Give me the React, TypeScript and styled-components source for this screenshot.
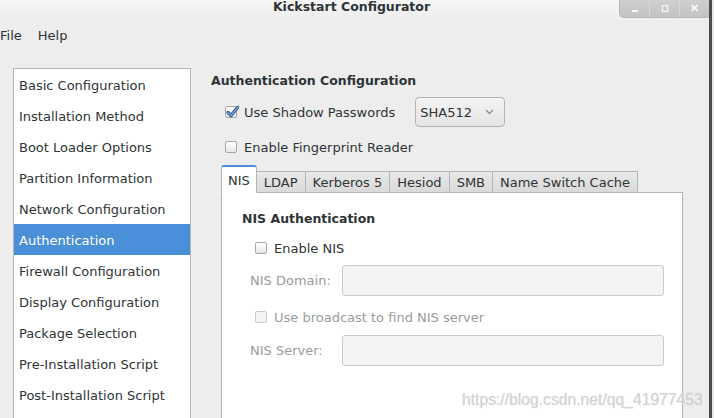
import styled, { createGlobalStyle } from "styled-components";

const GlobalStyle = createGlobalStyle`
    html, body {
        margin: 0;
        padding: 0;
        background: #e8e8e8;
        overflow: hidden;
    }
    body {
        font-family: "DejaVu Sans", "Liberation Sans", sans-serif;
        font-size: 13px;
        color: #2e3436;
    }
`;

const Window = styled.div({
    width: "712px",
    height: "418px",
    boxSizing: "border-box",
    borderRight: "3px solid #4b4d4d",
    backgroundColor: "#ededed",
    display: "flex",
    flexDirection: "column",
    overflow: "hidden"
});

const TitleBar = styled.header({
    height: "23px",
    flexShrink: 0,
    display: "flex",
    alignItems: "flex-start",
    background: "linear-gradient(to bottom, #f7f7f7 0%, #f1f1f1 50%, #ececec 100%)"
});

const TitleSide = styled.div<{ $end?: boolean }>`
    flex: 1;
    display: flex;
    justify-content: ${(p) => (p.$end ? "flex-end" : "flex-start")};
`;

const Title = styled.h1({
    margin: "0",
    fontSize: "12.5px",
    lineHeight: "13px",
    fontWeight: "bold",
    color: "#2e3436",
    paddingRight: "6px"
});

const Controls = styled.div({
    display: "flex",
    height: "17px",
    borderBottomLeftRadius: "5px",
    border: "1px solid #b8b8b8",
    borderTop: "none",
    borderRight: "none",
    background: "linear-gradient(to bottom, #cfcfcf, #c3c3c3)",
    overflow: "hidden"
});

const ControlButton = styled.div<{ $last?: boolean }>`
    width: 29px;
    display: flex;
    align-items: center;
    justify-content: center;
    border-right: ${(p) => (p.$last ? "none" : "1px solid #d8d8d8")};
`;

const MenuBar = styled.nav({
    height: "26px",
    flexShrink: 0,
    display: "flex",
    alignItems: "center",
    gap: "16px"
});

const MenuItem = styled.span({
    lineHeight: "26px",
    color: "#2e3436"
});

const Main = styled.div({
    flex: 1,
    minHeight: 0,
    display: "flex",
    alignItems: "stretch"
});

const Sidebar = styled.ul({
    listStyle: "none",
    margin: "19px 0 0 13px",
    padding: "0",
    width: "178px",
    boxSizing: "border-box",
    border: "1px solid #b4b4b4",
    borderBottom: "none",
    backgroundColor: "#ffffff",
    overflow: "hidden",
    flexShrink: 0
});

const SidebarItem = styled.li<{ $selected?: boolean }>`
    height: 31px;
    line-height: 33px;
    padding-left: 5px;
    white-space: nowrap;
    overflow: hidden;
    color: ${(p) => (p.$selected ? "#ffffff" : "#2e3436")};
    background: ${(p) => (p.$selected ? "#4a90d9" : "transparent")};
`;

const Content = styled.section({
    flex: 1,
    minWidth: 0,
    padding: "23px 0 0 20px",
    display: "flex",
    flexDirection: "column"
});

const Heading = styled.h2({
    margin: "0",
    fontSize: "12.5px",
    lineHeight: "18px",
    fontWeight: "bold",
    color: "#2e3436"
});

const Options = styled.div({
    paddingLeft: "14px",
    display: "flex",
    flexDirection: "column"
});

const CheckRow = styled.label<{ $height?: number; $gap?: number; $disabled?: boolean }>`
    display: flex;
    align-items: center;
    height: ${(p) => p.$height ?? 20}px;
    margin-top: ${(p) => p.$gap ?? 10}px;
    color: ${(p) => (p.$disabled ? "#9a9c9c" : "#2e3436")};
    white-space: nowrap;
`;

const Box = styled.span<{ $disabled?: boolean }>`
    position: relative;
    width: 12px;
    height: 12px;
    box-sizing: border-box;
    border: 1px solid ${(p) => (p.$disabled ? "#cdcdcd" : "#a7a7a7")};
    border-radius: 2px;
    background: ${(p) =>
        p.$disabled ? "#f4f4f4" : "linear-gradient(to bottom, #ffffff, #e6e6e6)"};
    margin-right: 7px;
    flex-shrink: 0;
`;

const Check = styled.svg({
    position: "absolute",
    left: "0px",
    top: "-2px",
    overflow: "visible"
});

const Combo = styled.div({
    marginLeft: "20px",
    width: "90px",
    height: "30px",
    boxSizing: "border-box",
    border: "1px solid #b3b3b3",
    borderRadius: "4px",
    background: "linear-gradient(to bottom, #f4f4f4, #e4e4e4)",
    display: "flex",
    alignItems: "center",
    justifyContent: "space-between",
    padding: "0 10px 0 4px",
    color: "#2e3436"
});

const Notebook = styled.div({
    marginTop: "9px",
    marginLeft: "10px",
    width: "462px",
    flex: 1,
    display: "flex",
    flexDirection: "column"
});

const TabStrip = styled.div({
    display: "flex",
    alignItems: "flex-end",
    height: "27px",
    position: "relative",
    zIndex: 1,
    marginBottom: "-1px"
});

const Tab = styled.div<{ $active?: boolean }>`
    box-sizing: border-box;
    padding: 0 7px;
    white-space: nowrap;
    color: #2e3436;
    border: 1px solid #b4b4b4;
    margin-left: -1px;
    &:first-child {
        margin-left: 0;
    }
    ${(p) =>
        p.$active
            ? `
        height: 28px;
        padding-left: 6px;
        padding-right: 6px;
        background: #ffffff;
        border-bottom-color: #ffffff;
        border-top: 2px solid #4a90d9;
        border-radius: 3px 3px 0 0;
        line-height: 27px;
        position: relative;
        z-index: 2;
    `
            : `
        height: 22px;
        line-height: 21px;
        background: linear-gradient(to bottom, #e9e9e9, #d9d9d9);
    `}
`;

const Panel = styled.div({
    flex: 1,
    border: "1px solid #b4b4b4",
    borderBottom: "none",
    backgroundColor: "#ffffff",
    padding: "17px 18px 0 20px",
    display: "flex",
    flexDirection: "column"
});

const PanelOptions = styled.div({
    paddingLeft: "13px",
    display: "flex",
    flexDirection: "column"
});

const FieldRow = styled.div<{ $gap?: number }>`
    display: flex;
    align-items: center;
    margin-top: ${(p) => p.$gap ?? 9}px;
    margin-left: 8px;
`;

const FieldLabel = styled.span({
    width: "92px",
    color: "#9a9c9c",
    flexShrink: 0
});

const Entry = styled.div({
    width: "323px",
    height: "31px",
    boxSizing: "border-box",
    border: "1px solid #cbcbcb",
    borderRadius: "3px",
    backgroundColor: "#f4f4f2"
});

const Watermark = styled.div({
    position: "absolute",
    left: "462px",
    top: "391px",
    fontFamily: '"Liberation Sans", Arial, sans-serif',
    fontSize: "15.7px",
    color: "rgba(210, 210, 210, 0.9)",
    textShadow: "0 0 1px rgba(150,150,150,0.35)",
    whiteSpace: "nowrap",
    pointerEvents: "none"
});

const sections = [
    "Basic Configuration",
    "Installation Method",
    "Boot Loader Options",
    "Partition Information",
    "Network Configuration",
    "Authentication",
    "Firewall Configuration",
    "Display Configuration",
    "Package Selection",
    "Pre-Installation Script",
    "Post-Installation Script"
];

const tabs = ["NIS", "LDAP", "Kerberos 5", "Hesiod", "SMB", "Name Switch Cache"];

const CheckBox = ({ checked, disabled }: { checked?: boolean; disabled?: boolean }) => {
    return (
        <Box $disabled={disabled}>
            {checked &&
                <Check width="13" height="13" viewBox="0 0 13 13">
                    <path d="M2 7.5 L5 10.5 L11.5 2.5" fill="none" stroke="#2d4f7a" strokeWidth="3.2" strokeLinecap="round" strokeLinejoin="round" />
                    <path d="M2 7.5 L5 10.5 L11.5 2.5" fill="none" stroke="#6fa6e6" strokeWidth="1.6" strokeLinecap="round" strokeLinejoin="round" />
                </Check>
            }
        </Box>
    );
}

const App = () => {
    return (
        <>
            <GlobalStyle />
            <Window>
                <TitleBar>
                    <TitleSide />
                    <Title>Kickstart Configurator</Title>
                    <TitleSide $end>
                        <Controls>
                            <ControlButton>
                                <svg width="8" height="8" viewBox="0 0 8 8">
                                    <rect x="1" y="5" width="6" height="2" fill="#f5f5f5" />
                                </svg>
                            </ControlButton>
                            <ControlButton>
                                <svg width="8" height="8" viewBox="0 0 8 8">
                                    <rect x="1.5" y="0.5" width="5" height="6" fill="none" stroke="#f5f5f5" strokeWidth="1.4" />
                                </svg>
                            </ControlButton>
                            <ControlButton $last>
                                <svg width="9" height="9" viewBox="0 0 9 9">
                                    <path d="M1.5 1 L7.5 7 M7.5 1 L1.5 7" stroke="#f5f5f5" strokeWidth="1.8" />
                                </svg>
                            </ControlButton>
                        </Controls>
                    </TitleSide>
                </TitleBar>

                <MenuBar>
                    <MenuItem>File</MenuItem>
                    <MenuItem>Help</MenuItem>
                </MenuBar>

                <Main>
                    <Sidebar>
                        {sections.map((name, idx) => {
                            return <SidebarItem key={idx} $selected={name == "Authentication"}>{name}</SidebarItem>
                        })}
                    </Sidebar>

                    <Content>
                        <Heading>Authentication Configuration</Heading>
                        <Options>
                            <CheckRow $height={30} $gap={7}>
                                <CheckBox checked />
                                Use Shadow Passwords
                                <Combo>
                                    <span>SHA512</span>
                                    <svg width="9" height="6" viewBox="0 0 9 6">
                                        <path d="M1 1 L4.5 4.5 L8 1" fill="none" stroke="#8a8a8a" strokeWidth="1.3" />
                                    </svg>
                                </Combo>
                            </CheckRow>
                            <CheckRow $gap={10}>
                                <CheckBox />
                                Enable Fingerprint Reader
                            </CheckRow>
                        </Options>

                        <Notebook>
                            <TabStrip>
                                {tabs.map((tab, idx) => {
                                    return <Tab key={idx} $active={idx == 0}>{tab}</Tab>
                                })}
                            </TabStrip>
                            <Panel>
                                <Heading>NIS Authentication</Heading>
                                <PanelOptions>
                                    <CheckRow $gap={10}>
                                        <CheckBox />
                                        Enable NIS
                                    </CheckRow>
                                </PanelOptions>
                                <FieldRow $gap={7}>
                                    <FieldLabel>NIS Domain:</FieldLabel>
                                    <Entry />
                                </FieldRow>
                                <PanelOptions>
                                    <CheckRow $gap={11} $disabled>
                                        <CheckBox disabled />
                                        Use broadcast to find NIS server
                                    </CheckRow>
                                </PanelOptions>
                                <FieldRow $gap={8}>
                                    <FieldLabel>NIS Server:</FieldLabel>
                                    <Entry />
                                </FieldRow>
                            </Panel>
                        </Notebook>
                    </Content>
                </Main>
            </Window>
            <Watermark>https://blog.csdn.net/qq_41977453</Watermark>
        </>
    );
}

export default App;
